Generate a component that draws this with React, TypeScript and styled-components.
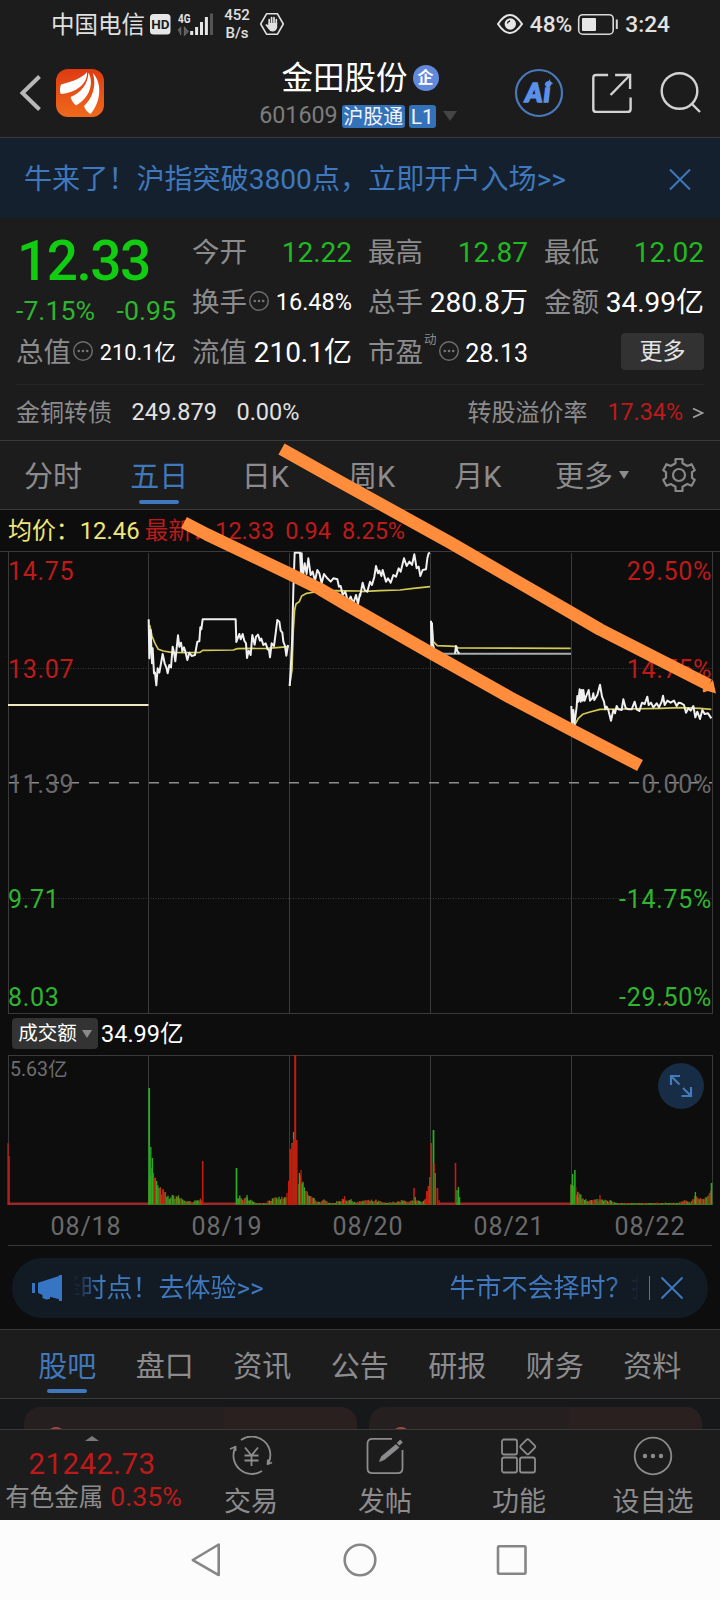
import React from 'react';
import styled, { createGlobalStyle, css } from 'styled-components';

const UP = '#be1a1a';
const DOWN = '#2fb52f';
const BLUE = '#3f78bd';
const GRAY = '#8c8c8e';
const LINE = '#3a3a3a';

const quotes = [
  [
    { label: '今开', value: '12.22', color: '#22b922' },
    { label: '最高', value: '12.87', color: '#22b922' },
    { label: '最低', value: '12.02', color: '#22b922' },
  ],
  [
    { label: '换手', value: '16.48%', tip: true, size: 23.5 },
    { label: '总手', value: '280.8万' },
    { label: '金额', value: '34.99亿' },
  ],
];

const periods = ['分时', '五日', '日K', '周K', '月K'];
const sections = ['股吧', '盘口', '资讯', '公告', '研报', '财务', '资料'];
const dates = ['08/18', '08/19', '08/20', '08/21', '08/22'];
const dayLines = [148.5, 289.5, 430.5, 571.5];

// price series, three units per pixel
const priceLeft = [
  '446,568 448,685 452,600 456,700 458,655 462,730 465,728 469,766 473,715 478,728 483,700 488,672 494,700 499,712 503,730 508,705 513,712 518,650 522,668 526,694 530,655 534,616 538,650 543,638 547,664 552,652 557,668 562,690 568,668 575,678 585,675 592,635 598,634 601,592 604,598 608,568 707,568 709,636 714,622 718,612 722,628 728,612 733,632 738,640 741,684 746,662 752,675 757,615 764,644 768,620 774,614 780,632 784,626 790,645 797,640 803,658 807,660 810,682 815,640 822,648 827,610 832,570 838,575 842,602 847,608 850,635 855,648 859,677 864,645',
  '869,768 872,720 876,640 880,480 884,368 900,368 903,430 905,370 908,445 914,400 920,432 925,385 932,435 938,425 945,452 952,420 958,430 965,460 972,432 982,445 992,455 1000,445 1012,448 1017,470 1022,468 1028,495 1036,485 1044,515 1052,500 1060,520 1068,495 1074,522 1080,490',
];
const priceRight = [
  '0,500 8,458 14,480 22,485 30,455 36,465 43,440 48,408 54,430 58,422 64,438 68,420 78,455 84,445 92,458 100,435 108,440 116,415 122,425 132,385 140,408 148,395 156,405 163,373 170,415 176,410 181,438 188,420 198,418 202,385 206,370 210,368',
  '213,572 214,650 216,580 218,640 222,655 228,670',
  '285,671 288,648 293,665 298,671',
  '634,828 636,880 640,840 643,885 650,830 652,798 655,815 659,778 662,815 665,780 668,812 670,780 674,812 678,800 686,780 690,812 697,805 700,790 703,810 712,795 716,780 720,764 726,800 732,815 736,838 740,830 745,840 753,872 760,840 765,850 770,828 775,838 785,840 790,808 797,834 806,838 815,838 824,815 830,838 838,843 846,818 854,822 862,800 866,825 873,818 880,832 890,820 897,832 905,815 909,797 914,825 922,812 932,818 942,812 950,828 956,818 964,820 972,825 978,848 985,835 992,842 1000,828 1006,862 1012,845 1020,867 1027,840 1034,852 1044,850 1054,865',
];
const avgLeft = [
  '449,585 456,618 465,640 475,658 490,663 515,667 560,668 600,667 608,661 700,660 712,656 800,655 840,652 866,650',
  '869,766 876,720 880,600 884,540 888,522 898,515 905,498 920,490 945,486 1000,482 1080,483',
];
const avgRight = [
  '0,485 60,482 120,480 160,475 210,470',
  '216,590 220,635 232,647 285,649 296,654 632,655',
  '644,885 655,865 668,853 690,846 720,838 800,837 900,835 960,833 1020,835 1054,838',
];

// upper bound of the turnover bars as [x, height]
const envelopes = [
  [[149, 42], [152, 38], [155, 27], [159, 18], [164, 14], [168, 9], [177, 10], [185, 5], [192, 3], [202, 7]],
  [[237, 11], [243, 6], [248, 8], [254, 3], [264, 2], [271, 6], [279, 8], [286, 8]],
  [[299, 30], [303, 22], [308, 12], [314, 7], [320, 3], [324, 5], [334, 2], [344, 7], [352, 5], [358, 3], [363, 5], [376, 5], [386, 2], [403, 5], [408, 3], [414, 6], [422, 3], [427, 7]],
  [[571, 20], [575, 18], [578, 12], [583, 8], [590, 5], [598, 6], [606, 7], [616, 2], [650, 2], [680, 3], [685, 5], [690, 2], [695, 9], [704, 6], [708, 10], [711, 14]],
] as [number, number][][];

const spikes: [number, number, 'r' | 'g', number?][] = [
  [8, 62, 'r'], [9.2, 49, 'r'],
  [149.2, 117, 'g', 1.8], [150.8, 58, 'g'], [152.4, 47, 'g'], [154.6, 27, 'r'], [156.6, 24, 'g'], [162.8, 16, 'r'],
  [172.8, 10, 'g'], [202.7, 44, 'r', 1.6], [236.5, 37, 'g', 1.8], [247, 10, 'g'],
  [287, 12, 'r'], [288.6, 24, 'r'], [290.2, 56, 'r', 1.8], [292, 62, 'r', 1.8], [293.6, 73, 'g', 1.4], [293.9, 66, 'r', 1.8],
  [295.2, 150, 'r', 2], [296.8, 65, 'r', 1.6], [299.4, 32, 'g'], [301, 35, 'r'], [302.4, 21, 'g'], [344.6, 9, 'r'],
  [414, 17, 'r', 1.6], [415.2, 8, 'g'], [427, 14, 'r', 2.2], [428.4, 19, 'r', 1.6], [430, 28, 'g', 1.4], [431.2, 62, 'r', 1.6],
  [433.5, 75, 'g', 1.8], [434.2, 42, 'r', 1.2], [435.2, 32, 'g', 1.2], [437.4, 17, 'r', 1.8], [439, 5, 'r'],
  [455.5, 42, 'r', 1.6], [457, 15, 'g'], [458.4, 18, 'g'], [459.6, 8, 'g'],
  [571.2, 20, 'g'], [572.6, 31, 'g'], [574.9, 35, 'g', 1.6], [575.8, 18, 'r'], [600, 10, 'r'],
  [695.4, 13, 'g'], [709.5, 12, 'r'], [711.5, 22, 'g', 1.6],
];

function buildBars() {
  const bars: { x: number; h: number; up: boolean }[] = [];
  let seed = 7;
  const rand = () => {
    seed = (seed * 16807) % 2147483647;
    return seed / 2147483647;
  };
  envelopes.forEach((env) => {
    for (let i = 0; i < env.length - 1; i++) {
      const [x0, h0] = env[i];
      const [x1, h1] = env[i + 1];
      for (let x = x0; x < x1; x += 1.4) {
        const top = h0 + ((h1 - h0) * (x - x0)) / (x1 - x0);
        bars.push({ x, h: Math.max(2, top * (0.6 + rand() * 0.5)), up: rand() > 0.5 });
      }
    }
  });
  return bars;
}

const bars = buildBars();

function MoreDots() {
  return (
    <TipIcon viewBox="0 0 22 22">
      <circle cx="11" cy="11" r="9.3" fill="none" stroke="#6c6c6e" strokeWidth="1.5" />
      <circle cx="6.8" cy="11" r="1.3" fill="#77777a" />
      <circle cx="11" cy="11" r="1.3" fill="#77777a" />
      <circle cx="15.2" cy="11" r="1.3" fill="#77777a" />
    </TipIcon>
  );
}

function StatusBar() {
  return (
    <Status>
      <Carrier>中国电信</Carrier>
      <svg width="110" height="44" viewBox="148 2 110 44">
        <rect x="150" y="14" width="20.5" height="20.5" rx="3.5" fill="#e6e6e6" />
        <text x="160.3" y="29.2" textAnchor="middle" fontSize="13.5" fontWeight="700" fill="#1c1c1c">HD</text>
        <text x="178" y="23.2" fontSize="13" fontWeight="700" fill="#e6e6e6" textLength="12.5" lengthAdjust="spacingAndGlyphs">4G</text>
        <path d="M178 30.5l2.6-2.6V35M184.5 27.5V35l3.5-3.5z" stroke="#666" strokeWidth="1.3" fill="#555" />
        <path d="M191.7 31v4M196.6 27v8M201.5 22v13M206.4 17v18" stroke="#e6e6e6" strokeWidth="3" />
        <path d="M211.5 13.5V35" stroke="#555" strokeWidth="3" />
        <text x="237" y="20.4" textAnchor="middle" fontSize="15" fontWeight="500" fill="#e0e0e0">452</text>
        <text x="237" y="38.2" textAnchor="middle" fontSize="15" fontWeight="500" fill="#e0e0e0">B/s</text>
      </svg>
      <svg width="28" height="26" viewBox="258 11 28 26">
        <path d="M266.5 13.8h11l5.8 10.2-5.8 10.2h-11L260.7 24z" fill="none" stroke="#e0e0e0" strokeWidth="1.6" strokeLinejoin="round" />
        <path d="M269.2 24v-4.5M271.6 23v-5.5M274 23v-5.5M276.3 24v-4.5" stroke="#e0e0e0" strokeWidth="1.7" strokeLinecap="round" />
        <path d="M268.3 23h8.9v4.5q-1 4-4.7 4-2.5 0-4-2.5l-3.3-4.3q1.5-1.2 3.1.6z" fill="#e0e0e0" />
      </svg>
      <Spacer />
      <svg width="28" height="24" viewBox="496 12 28 24">
        <path d="M498 24q12-18 24 0q-12 18-24 0z" fill="none" stroke="#e6e6e6" strokeWidth="2" />
        <circle cx="510.3" cy="24" r="5.7" fill="#e6e6e6" />
        <path d="M510 21a3 3 0 0 0-2.6 2.5" stroke="#1c1c1c" strokeWidth="1.3" fill="none" />
      </svg>
      <StatusText $left={6}>48%</StatusText>
      <Battery viewBox="576 12 44 24">
        <rect x="578.7" y="14.7" width="34.5" height="19.5" rx="4" fill="none" stroke="#d8d8d8" strokeWidth="1.6" />
        <rect x="582" y="18" width="14" height="13" rx="1" fill="#e6e6e6" />
        <path d="M616.8 19.5v9.5" stroke="#d8d8d8" strokeWidth="2" />
      </Battery>
      <StatusText $left={5}>3:24</StatusText>
    </Status>
  );
}

function TitleBar() {
  return (
    <Header>
      <HeaderLeft>
        <svg width="24" height="38" viewBox="0 0 24 38" fill="none">
          <path d="M20.5 2.5L3.5 19l17 16.5" stroke="#b8b8b8" strokeWidth="4" />
        </svg>
        <svg width="48" height="48" viewBox="0 0 48 48">
          <defs>
            <linearGradient id="logo" x1="0" y1="0" x2="0" y2="1">
              <stop offset="0" stopColor="#df3a12" />
              <stop offset="1" stopColor="#ef6a1c" />
            </linearGradient>
          </defs>
          <rect width="48" height="48" rx="12" fill="url(#logo)" />
          <g fill="#fff">
            <path d="M31 3C27 8.5 17 12.5 5 15.5C3.800 18.500 3.500 22.500 4.800 25C20 24 32 14.500 31 3z" />
            <path d="M32.500 3.500C32 15 25 24 14.500 28C15.500 31.500 17.500 34.500 20 36.500C33 29.500 38.500 15 32.500 3.500z" />
            <path d="M36.800 4C41 17 36 30 28 37C29 40.500 31.500 43.500 34.500 45C45 33 46.500 14 36.800 4z" />
          </g>
        </svg>
      </HeaderLeft>
      <TitleBox>
        <StockName>
          金田股份
          <Company>企</Company>
        </StockName>
        <StockCode>
          601609
          <Tag>沪股通</Tag>
          <Tag $wide>L1</Tag>
          <svg width="14" height="10" viewBox="0 0 14 10"><path d="M0 0h14L7 10z" fill="#454545" /></svg>
        </StockCode>
      </TitleBox>
      <HeaderRight>
        <svg width="50" height="50" viewBox="0 0 50 50">
          <circle cx="25" cy="25" r="23" fill="none" stroke="#4879bd" strokeWidth="2.2" />
          <text x="24.5" y="34" textAnchor="middle" fontFamily="Lato" fontWeight="900" fontStyle="italic" fontSize="26" letterSpacing="1.5" fill="#5b90e8" stroke="#5b90e8" strokeWidth="1.6">Ai</text>
          <path d="M35.5 11q.8 3.5 4 4.2-3.2.7-4 4.2-.8-3.5-4-4.2 3.2-.7 4-4.2z" fill="#5b90e8" />
        </svg>
        <svg width="40" height="40" viewBox="0 0 40 40" fill="none" stroke="#d2d2d2" strokeWidth="2.4">
          <path d="M15.500 2H3.500Q.700 2 .700 5v31q0 3 3 3h31.300q3 0 3-3V24.500M22.500 2h15v14M37 2.500L18 22" transform="translate(.6 0)" />
        </svg>
        <svg width="42" height="42" viewBox="0 0 42 42" fill="none" stroke="#d2d2d2" strokeWidth="2.4">
          <circle cx="19.5" cy="19" r="17.8" />
          <path d="M31.5 31.5l8.5 8.5" />
        </svg>
      </HeaderRight>
    </Header>
  );
}

function Quote() {
  return (
    <QuoteBox>
      <QuoteGrid>
        <PriceCell>
          <Price>12.33</Price>
          <Change>
            <span>-7.15%</span>
            <span>-0.95</span>
          </Change>
        </PriceCell>
        {quotes.map((row) =>
          row.map((q: any) => (
            <Cell key={q.label}>
              <Label>{q.label}</Label>
              {q.tip && <MoreDots />}
              <Value $color={q.color} $size={q.size}>{q.value}</Value>
            </Cell>
          ))
        )}
        <Cell>
          <Label>总值</Label>
          <MoreDots />
          <Value $size={21.7}>210.1亿</Value>
        </Cell>
        <Cell>
          <Label>流值</Label>
          <Value>210.1亿</Value>
        </Cell>
        <Cell>
          <Label>市盈</Label>
          <Dynamic>动</Dynamic>
          <MoreDots />
          <Value $size={25}>28.13</Value>
        </Cell>
        <Cell>
          <MoreButton>更多</MoreButton>
        </Cell>
      </QuoteGrid>
      <Bond>
        <BondName>金铜转债</BondName>
        <BondValue>249.879</BondValue>
        <BondValue>0.00%</BondValue>
        <Spacer />
        <BondName>转股溢价率</BondName>
        <BondRate>17.34%</BondRate>
        <svg width="12" height="14" viewBox="0 0 12 14" fill="none"><path d="M1 2.5l9.5 4.5L1 11.5" stroke="#a0a0a0" strokeWidth="1.7" /></svg>
      </Bond>
    </QuoteBox>
  );
}

function PriceChart() {
  return (
    <PriceSvg viewBox="0 0 720 463">
      <g stroke={LINE} fill="none">
        <path d="M0 .5H720M8 462.5H712M8.5 0V463M712.5 0V463" />
        {dayLines.map((x) => <path key={x} d={`M${x} 2V462`} />)}
        <path d="M8 117.5H712M8 347.5H712" strokeDasharray="1 1.5" />
      </g>
      <path d="M9 231.7H712" stroke="#8d8d8d" strokeWidth="1.6" strokeDasharray="10 10" />
      <g fontSize="25" letterSpacing=".7">
        <g fill={UP}>
          <text x="8" y="29">14.75</text>
          <text x="8" y="127">13.07</text>
          <text x="712" y="29" textAnchor="end">29.50%</text>
          <text x="712" y="127" textAnchor="end">14.75%</text>
        </g>
        <g fill="#69696b">
          <text x="8" y="242">11.39</text>
          <text x="712" y="242" textAnchor="end">0.00%</text>
        </g>
        <g fill={DOWN}>
          <text x="8" y="357">9.71</text>
          <text x="8" y="455">8.03</text>
          <text x="712" y="357" textAnchor="end">-14.75%</text>
          <text x="712" y="455" textAnchor="end">-29.50%</text>
        </g>
      </g>
      <path d="M8 154H148.5" stroke="#ece8c0" strokeWidth="2" />
      <path d="M442 102.7H571" stroke="#a9adae" strokeWidth="2" />
      <g fill="none" strokeLinejoin="round">
        <g transform="translate(0 -121) scale(.33333)">
          <g stroke="#d2ca55" strokeWidth="5">{avgLeft.map((p) => <polyline key={p} points={p} />)}</g>
          <g stroke="#f0f0f0" strokeWidth="6">{priceLeft.map((p) => <polyline key={p} points={p} />)}</g>
        </g>
        <g transform="translate(360 -121) scale(.33333)">
          <g stroke="#d2ca55" strokeWidth="5">{avgRight.map((p) => <polyline key={p} points={p} />)}</g>
          <g stroke="#f0f0f0" strokeWidth="6">{priceRight.map((p) => <polyline key={p} points={p} />)}</g>
        </g>
      </g>
      <path d="M663 455l2.5-5 3 2-2.500 1z" fill="#c4602c" />
    </PriceSvg>
  );
}

function VolumeChart() {
  return (
    <VolumeBox>
      <svg width="720" height="150" viewBox="0 0 720 150">
        <g stroke={LINE} fill="none">
          <path d="M8 .5H712M8.5 0V150M712.5 0V150" />
          {dayLines.map((x) => <path key={x} d={`M${x} 0V150`} />)}
        </g>
        <text x="10" y="21" fontSize="19.5" fill="#6e6e70">5.63亿</text>
        <g stroke="#9c2828" strokeWidth="2.4">
          <path d="M8 148.8H149M202 148.8H236M438 148.8H571" />
        </g>
        {bars.map((b) => (
          <path key={b.x} d={`M${b.x} 150V${150 - b.h}`} stroke={b.up ? '#b4401a' : '#4c9a1e'} strokeWidth="1.4" />
        ))}
        {spikes.map(([x, h, c, w]) => (
          <path key={x} d={`M${x} 150V${150 - h}`} stroke={c === 'r' ? '#c41d10' : '#27ad22'} strokeWidth={w || 1.3} />
        ))}
        <path d="M149 149.5H202M236 149.5H286M299 149.5H427M572 149.5H712" stroke="#3f7a1c" strokeWidth="1" />
      </svg>
      <Expand>
        <svg width="24" height="24" viewBox="0 0 24 24" fill="none" stroke="#4579b8" strokeWidth="2.2">
          <path d="M2 11V2h9M2.5 2.5l8 8M14 14l7.500 7.500M22 13v9h-9.500" />
        </svg>
      </Expand>
    </VolumeBox>
  );
}

function Notice() {
  return (
    <NoticeWrap>
      <NoticeBar>
        <svg width="32" height="28" viewBox="0 0 32 28" fill="#3674c4">
          <path d="M0 9h3v10H0zM6 8.800L27 2V1h3v26h-3v-1.800l-9-2.400V25h-2l-1.500.8L10.500 24v-3L6 19z" />
        </svg>
        <Ticker>
          <TickerText>择时点！去体验&gt;&gt;</TickerText>
          <TickerText>牛市不会择时？找</TickerText>
        </Ticker>
        <Divider />
        <svg width="24" height="24" viewBox="0 0 24 24" stroke="#3f78bd" strokeWidth="2"><path d="M1.500 1.500l21 21M22.500 1.500l-21 21" /></svg>
      </NoticeBar>
    </NoticeWrap>
  );
}

function BottomNav() {
  return (
    <Nav>
      <IndexBox>
        <svg width="14" height="5" viewBox="0 0 14 5"><path d="M0 5L7 0l7 5z" fill="#7a7a7c" /></svg>
        <IndexValue>21242.73</IndexValue>
        <IndexName>有色金属 <em>0.35%</em></IndexName>
      </IndexBox>
      <NavItem>
        <NavIcon viewBox="0 0 44 40">
          <path d="M12 4A18.500 18.500 0 0 1 39 28M38.500 28.500l.500-5M38 28.500l5-2M33 35A18.500 18.500 0 0 1 6.500 11M1 13l6-2.500M6.500 10v5" />
          <path d="M16 11.500l6.500 8 6.500-8M22.500 19.500V30M15.500 19.500h14M15.500 24.500h14" />
        </NavIcon>
        交易
      </NavItem>
      <NavItem>
        <NavIcon viewBox="0 0 44 40">
          <path d="M29 2.800H9.500Q4.500 2.800 4.500 7.800v24.400q0 5 5 5h25q5 0 5-5V14" />
          <path d="M16.500 25.500l2-5L33 8.500l3 3-14.500 12zM34.200 7l3-3 2.200 2.200-3 3z" fill={GRAY} strokeWidth=".8" />
        </NavIcon>
        发帖
      </NavItem>
      <NavItem>
        <NavIcon viewBox="0 0 44 40">
          <rect x="5" y="3.500" width="15" height="15" rx="2" />
          <rect x="5" y="21.500" width="15" height="15" rx="2" />
          <rect x="23" y="21.500" width="15" height="15" rx="2" />
          <rect x="25" y="5" width="11.500" height="11.500" rx="1.500" transform="rotate(45 30.750 10.750)" />
        </NavIcon>
        功能
      </NavItem>
      <NavItem>
        <NavIcon viewBox="0 0 44 40">
          <circle cx="22" cy="20" r="18.300" />
          <g fill={GRAY} stroke="none">
            <circle cx="14" cy="20" r="2.200" />
            <circle cx="22" cy="20" r="2.200" />
            <circle cx="30" cy="20" r="2.200" />
          </g>
        </NavIcon>
        设自选
      </NavItem>
    </Nav>
  );
}

function App() {
  return (
    <Page>
      <GlobalStyle />
      <StatusBar />
      <TitleBar />
      <Banner>
        牛来了！沪指突破3800点，立即开户入场&gt;&gt;
        <svg width="24" height="24" viewBox="0 0 24 24" stroke="#3f78bd" strokeWidth="2"><path d="M2 .500l20 20M22 .500L2 20.500" /></svg>
      </Banner>
      <Quote />
      <PeriodTabs>
        {periods.map((p) => <Period key={p} $active={p === '五日'}>{p}</Period>)}
        <MorePeriod>
          更多
          <svg width="10" height="8" viewBox="0 0 10 8"><path d="M0 0h10L5 8z" fill={GRAY} /></svg>
        </MorePeriod>
        <svg width="36" height="36" viewBox="0 0 36 36" fill="none" stroke="#88888a" strokeWidth="2.200" strokeLinejoin="round">
          <path d="M14.500 2h7v4.200l4.800 2.800 4.300-1.800 3.200 6-2.800 2v5.600l2.800 2-3.200 6-4.300-1.800-4.800 2.800V34h-7v-4.200L9.700 27l-4.300 1.800-3.200-6 2.800-2v-5.600l-2.800-2 3.200-6L9.700 9l4.800-2.800z" />
          <circle cx="18" cy="18" r="6" />
        </svg>
      </PeriodTabs>
      <Summary>
        <Avg>均价：12.46</Avg>
        <Last>最新：12.33</Last>
        <Last>0.94</Last>
        <Last>8.25%</Last>
      </Summary>
      <PriceChart />
      <VolumeHead>
        <VolumeType>
          成交额
          <svg width="10" height="8" viewBox="0 0 10 8"><path d="M0 0h10L5 8z" fill="#8a8a8a" /></svg>
        </VolumeType>
        34.99亿
      </VolumeHead>
      <VolumeChart />
      <Dates>{dates.map((d) => <span key={d}>{d}</span>)}</Dates>
      <Notice />
      <SectionTabs>
        {sections.map((s) => <Section key={s} $active={s === '股吧'}>{s}</Section>)}
      </SectionTabs>
      <Cards>
        <Card />
        <Card />
      </Cards>
      <BottomNav />
      <SystemNav>
        <svg width="336" height="36" viewBox="191 1542 336 36" fill="none" stroke="#868686" strokeWidth="2.600" strokeLinejoin="round">
          <path d="M218.700 1544.500v30.500L192.800 1560z" />
          <circle cx="360" cy="1560" r="15.300" />
          <rect x="498" y="1546.300" width="27.500" height="27.500" rx="1" />
        </svg>
      </SystemNav>
      <Marks viewBox="0 0 720 1600">
        <polyline points="281.500,449 336,479.500 450,542.500 571.700,613 600,629.500 709,685" />
        <polyline points="184,522.500 207,534.500 292,575 320,589 347,605 430,652.500 510,697.500 571.700,730 640,765.500" />
        <path d="M702.500 690l1 2.500 4-1.500 8.500 2.500-3-13.500z" fill="#ff8d3c" stroke="none" />
      </Marks>
    </Page>
  );
}

export default App;

const GlobalStyle = createGlobalStyle`
* {
  box-sizing: border-box;
}
body {
  margin: 0;
  background: #0d0d0d;
  font-family: Roboto, "Noto Sans CJK SC", sans-serif;
  line-height: 1;
}
svg {
  display: block;
  flex-shrink: 0;
}
`;

const Page = styled.div`
position: relative;
width: 720px;
height: 1600px;
overflow: hidden;
background: #0d0d0d;
color: #fff;
white-space: nowrap;
`;

const Spacer = styled.div`
flex: 1;
`;

const Status = styled.div`
display: flex;
align-items: center;
height: 48px;
padding: 0 50px 0 51px;
background: #1c1c1c;
`;

const Carrier = styled.span`
width: 97px;
padding-top: 3px;
color: #e0e0e0;
font-size: 23.5px;
`;

const StatusText = styled.span<{ $left: number }>`
margin-left: ${(p) => p.$left}px;
padding-top: 2px;
color: #e2e2e2;
font-size: 22.7px;
font-weight: 500;
`;

const Battery = styled.svg`
width: 44px;
height: 24px;
margin-left: 4px;
`;

const Header = styled.div`
display: grid;
grid-template-columns: 220px 280px 220px;
height: 90px;
background: #1c1c1c;
border-bottom: 1px solid ${LINE};
`;

const HeaderLeft = styled.div`
display: flex;
align-items: center;
gap: 13px;
padding-left: 19px;
`;

const TitleBox = styled.div`
display: flex;
flex-direction: column;
align-items: center;
padding-top: 13px;
`;

const StockName = styled.div`
display: flex;
align-items: center;
gap: 5px;
height: 36px;
font-size: 31.5px;
`;

const Company = styled.span`
width: 26px;
height: 26px;
margin-top: -2px;
border-radius: 50%;
background: #6288dc;
font-size: 16px;
font-weight: 700;
line-height: 26px;
text-align: center;
`;

const StockCode = styled.div`
display: flex;
align-items: center;
gap: 4px;
height: 38px;
padding-right: 4px;
color: #7c7c7e;
font-size: 23.3px;

svg {
  margin-left: 3px;
}
`;

const Tag = styled.span<{ $wide?: boolean }>`
height: 23px;
padding: 0 ${(p) => (p.$wide ? 2 : 1.5)}px;
border-radius: 3px;
background: #3371b8;
color: #f0f4fa;
font-size: ${(p) => (p.$wide ? 21 : 20)}px;
line-height: 24px;
`;

const HeaderRight = styled.div`
display: flex;
align-items: center;
justify-content: flex-end;
gap: 28px;
padding-right: 18px;
`;

const Banner = styled.div`
display: flex;
align-items: center;
justify-content: space-between;
height: 80px;
padding: 5px 28px 0 24px;
background: #14202e;
color: ${BLUE};
font-size: 28.1px;
`;

const QuoteBox = styled.div`
height: 222px;
padding: 9px 16px 0;
background: #1c1c1c;
`;

const QuoteGrid = styled.div`
display: grid;
grid-template-columns: repeat(4, 160px);
grid-auto-rows: 50px;
column-gap: 16px;
height: 158px;
border-bottom: 1px solid #262626;
`;

const PriceCell = styled.div`
grid-row: span 2;
`;

const Price = styled.div`
height: 71px;
padding-left: 1px;
color: #12cc12;
font-size: 55px;
font-weight: 500;
letter-spacing: -1.5px;
line-height: 69px;
`;

const Change = styled.div`
display: flex;
justify-content: space-between;
color: ${DOWN};
font-size: 26.7px;
`;

const Cell = styled.div`
display: flex;
align-items: center;
`;

const Label = styled.span`
padding-top: 2px;
color: ${GRAY};
font-size: 27.5px;
`;

const Value = styled.span<{ $color?: string; $size?: number }>`
margin-left: auto;
padding-top: 2px;
color: ${(p) => p.$color || '#fff'};
font-size: ${(p) => p.$size || 28}px;
`;

const TipIcon = styled.svg`
width: 22px;
height: 22px;
margin: -2px 0 0 1px;
`;

const Dynamic = styled.span`
margin: -24px 0 0 1px;
color: ${GRAY};
font-size: 12.5px;
`;

const MoreButton = styled.span`
width: 83px;
height: 37px;
margin: -2px 0 0 auto;
border-radius: 4px;
background: #323232;
color: #e4e4e4;
font-size: 23px;
line-height: 38px;
text-align: center;
`;

const Bond = styled.div`
display: flex;
align-items: center;
height: 55px;
`;

const BondName = styled.span`
color: ${GRAY};
font-size: 24px;
`;

const BondValue = styled.span`
margin-left: 19.5px;
color: #e2e2e2;
font-size: 23.5px;
`;

const BondRate = styled.span`
margin: 0 9px 0 20px;
color: ${UP};
font-size: 23.3px;
`;

const PeriodTabs = styled.div`
display: flex;
align-items: center;
height: 70px;
border-top: 1px solid ${LINE};
border-bottom: 1px solid ${LINE};
background: #1c1c1c;
`;

const activeTab = css`
color: ${BLUE};

&::after {
  content: '';
  position: absolute;
  bottom: 5px;
  left: 50%;
  width: 40px;
  height: 4px;
  margin-left: -20px;
  border-radius: 2px;
  background: ${BLUE};
}
`;

const Period = styled.div<{ $active: boolean }>`
position: relative;
width: 106.2px;
height: 68px;
color: ${GRAY};
font-size: 29px;
line-height: 73px;
text-align: center;
${(p) => p.$active && activeTab}
`;

const MorePeriod = styled.div`
display: flex;
align-items: center;
gap: 6px;
width: 130px;
padding-top: 5px;
padding-left: 24px;
color: ${GRAY};
font-size: 29px;

svg {
  margin-top: -5px;
}
`;

const Summary = styled.div`
display: flex;
align-items: center;
height: 41px;
padding-top: 2px;
padding-left: 8px;
font-size: 23.5px;
`;

const Avg = styled.span`
margin-right: 5px;
color: #f0e67a;
font-size: 23.9px;
`;

const Last = styled.span`
margin-right: 11px;
color: ${UP};
`;

const PriceSvg = styled.svg`
width: 720px;
height: 463px;
`;

const VolumeHead = styled.div`
display: flex;
align-items: center;
gap: 3px;
height: 41px;
padding: 0 12px 0;
font-size: 23.5px;
`;

const VolumeType = styled.div`
display: flex;
align-items: center;
justify-content: center;
gap: 5px;
width: 86px;
height: 31px;
margin-top: -2px;
padding-top: 1px;
border-radius: 4px;
background: #333;
font-size: 19.5px;
`;

const VolumeBox = styled.div`
position: relative;
height: 150px;
`;

const Expand = styled.div`
position: absolute;
top: 8px;
right: 16px;
display: flex;
align-items: center;
justify-content: center;
width: 46px;
height: 46px;
border-radius: 50%;
background: #172c45;
`;

const Dates = styled.div`
display: grid;
grid-template-columns: repeat(5, 141px);
height: 41px;
margin: 0 8px;
border-bottom: 1px solid ${LINE};
color: #6a6a6c;
font-size: 25px;
letter-spacing: .9px;
line-height: 43px;
text-align: center;

span {
  padding-right: 5px;
  padding-left: 20px;
}
`;

const NoticeWrap = styled.div`
height: 83px;
padding: 12px 12px 0;
`;

const NoticeBar = styled.div`
display: flex;
align-items: center;
height: 60px;
padding: 0 24px 0 20px;
border-radius: 30px;
background: #121a24;
`;

const Ticker = styled.div`
display: flex;
width: 567px;
margin-left: 9px;
overflow: hidden;
mask-image: linear-gradient(90deg, transparent 0, #000 28px, #000 538px, transparent 566px);
`;

const TickerText = styled.span`
width: 395px;
flex-shrink: 0;
color: ${BLUE};
font-size: 26px;
line-height: 37px;
text-indent: -18.5px;
`;

const Divider = styled.div`
width: 1px;
height: 24px;
margin: 0 10px 0 10px;
background: ${BLUE};
`;

const SectionTabs = styled.div`
display: flex;
height: 70px;
padding: 0 18.5px;
border-top: 1px solid ${LINE};
border-bottom: 1px solid ${LINE};
background: #1c1c1c;
`;

const Section = styled.div<{ $active: boolean }>`
position: relative;
width: 97.5px;
color: ${GRAY};
font-size: 29px;
line-height: 75px;
text-align: center;
${(p) => p.$active && activeTab}
`;

const Cards = styled.div`
display: flex;
gap: 12px;
height: 30px;
padding: 8px 18px 0 24px;
background: #17181a;
overflow: hidden;
`;

const Card = styled.div`
width: 333px;
height: 60px;
border-radius: 16px;
background: radial-gradient(circle at 32px 29px, #a34540 8.5px, transparent 9.5px), linear-gradient(90deg, #251f1f 60%, #2b2020 60%);
`;

const Nav = styled.div`
display: flex;
height: 91px;
border-top: 1px solid ${LINE};
background: #1c1c1c;
`;

const IndexBox = styled.div`
display: flex;
flex-direction: column;
align-items: center;
width: 184px;
padding-top: 6px;
`;

const IndexValue = styled.div`
margin-top: 6px;
color: ${UP};
font-size: 29.5px;
letter-spacing: .4px;
line-height: 35px;
`;

const IndexName = styled.div`
margin-left: 3px;
color: ${GRAY};
font-size: 24.5px;
line-height: 31px;

em {
  margin-left: 1px;
  color: ${UP};
  font-size: 26.7px;
  font-style: normal;
}
`;

const NavItem = styled.div`
display: flex;
flex-direction: column;
align-items: center;
width: 134px;
padding-top: 6px;
color: ${GRAY};
font-size: 27px;
line-height: 53px;
`;

const NavIcon = styled.svg`
width: 44px;
height: 40px;
fill: none;
stroke: ${GRAY};
stroke-width: 1.8;
`;

const SystemNav = styled.div`
display: flex;
align-items: center;
height: 80px;
padding-left: 191px;
background: #fcfcfc;
`;

const Marks = styled.svg`
position: absolute;
top: 0;
left: 0;
width: 720px;
height: 1600px;
fill: none;
stroke: #ff8d3c;
stroke-width: 12.5;
stroke-linejoin: round;
pointer-events: none;
`;
